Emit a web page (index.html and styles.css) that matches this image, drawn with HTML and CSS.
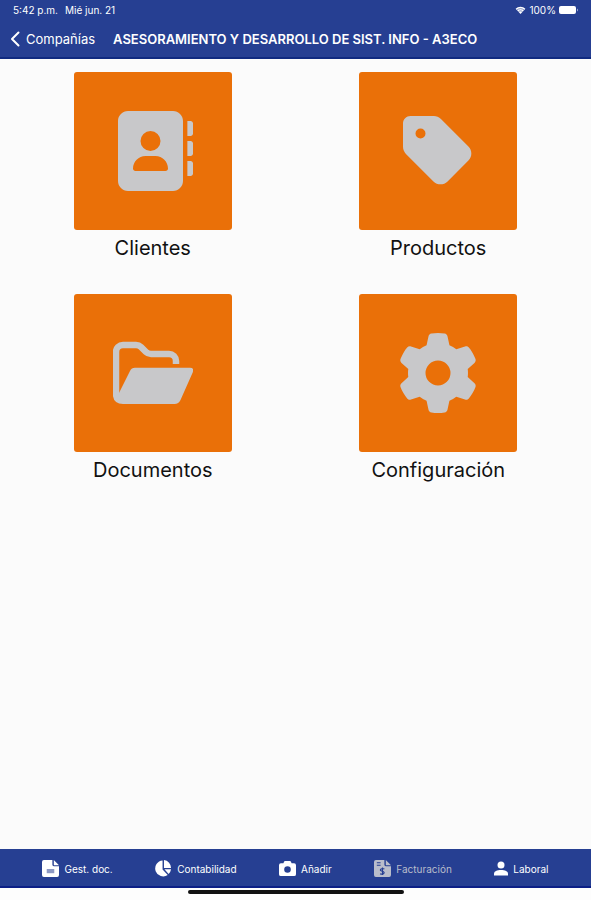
FILE: index.html
```html
<!DOCTYPE html>
<html lang="es">
<head>
<meta charset="utf-8">
<meta name="viewport" content="width=device-width, initial-scale=1">
<title>Facturación</title>
<link rel="stylesheet" href="styles.css">
</head>
<body>
<header class="top">
  <div class="status">
    <span>5:42 p.m.</span>
    <span>Mié jun. 21</span>
    <span class="status-right">
      <svg class="wifi" viewBox="0 0 12 9" aria-hidden="true"><path d="M6 9 0.5 3.2C3.500 0 8.500 0 11.500 3.200Z" fill="#fff"/><path d="M2 4.600C4.200 2.500 7.800 2.500 10 4.600M3.700 6.400C5 5.200 7 5.200 8.300 6.400" fill="none" stroke="#263f92" stroke-width=".7"/></svg>
      <span>100%</span>
      <svg class="battery" viewBox="0 0 20 8" aria-hidden="true"><rect width="17" height="8" rx="2" fill="#fff"/><path d="M18 2.500q2 1.500 0 3z" fill="#a9b3d6"/></svg>
    </span>
  </div>
  <nav class="bar">
    <a class="back" href="#companias"><svg class="chevron" viewBox="0 0 10 16" aria-hidden="true"><path d="M8.500 1.500 2 8l6.500 6.500" fill="none" stroke="#fff" stroke-width="2" stroke-linecap="round" stroke-linejoin="round"/></svg>Compañías</a>
    <h1 class="title">ASESORAMIENTO Y DESARROLLO DE SIST. INFO - A3ECO</h1>
  </nav>
</header>
<main class="grid">
  <button class="item" type="button">
    <span class="tile"><svg class="icon" viewBox="0 0 512 512" aria-hidden="true"><path d="M96 0C60.700 0 32 28.700 32 64V448c0 35.300 28.700 64 64 64H384c35.300 0 64-28.700 64-64V64c0-35.300-28.700-64-64-64H96zM208 288h64c44.200 0 80 35.800 80 80c0 8.800-7.200 16-16 16H144c-8.800 0-16-7.200-16-16c0-44.200 35.800-80 80-80zm-32-96a64 64 0 1 1 128 0 64 64 0 1 1-128 0zM476 64h20c8.800 0 16 7.200 16 16v64c0 8.800-7.200 16-16 16h-20zM476 192h20c8.800 0 16 7.200 16 16v64c0 8.800-7.200 16-16 16h-20zM476 320h20c8.800 0 16 7.200 16 16v64c0 8.800-7.200 16-16 16h-20z"/></svg></span>
    <span class="label">Clientes</span>
  </button>
  <button class="item" type="button">
    <span class="tile"><svg class="icon" viewBox="-32 0 512 512" aria-hidden="true"><path d="M0 80V229.500c0 17 6.700 33.300 18.700 45.300l176 176c25 25 65.500 25 90.500 0L418.700 317.300c25-25 25-65.500 0-90.500l-176-176c-12-12-28.300-18.700-45.300-18.700H48C21.500 32 0 53.500 0 80zm112 32a32 32 0 1 1 0 64 32 32 0 1 1 0-64z"/></svg></span>
    <span class="label">Productos</span>
  </button>
  <button class="item" type="button">
    <span class="tile"><svg class="icon" viewBox="0 0 80 80" aria-hidden="true"><path d="M3 60V19a7 7 0 0 1 7-7H23q3 0 5 2l5 5q2 2 5 2H56a7 7 0 0 1 7 7v3" fill="none" stroke="#c8c8ca" stroke-width="6.500"/><path d="M6 60 17 38Q18.500 34.700 22 34.700H77q4.500 0 2.800 4.500L67.500 67q-1.800 4-6 4H10Q0 71-.200 61V50H6z"/></svg></span>
    <span class="label">Documentos</span>
  </button>
  <button class="item" type="button">
    <span class="tile"><svg class="icon" viewBox="0 0 512 512" aria-hidden="true"><path d="M495.900 166.600c3.200 8.700 .5 18.400-6.400 24.600l-43.300 39.400c1.100 8.300 1.700 16.800 1.700 25.400s-.6 17.100-1.700 25.400l43.300 39.400c6.900 6.200 9.600 15.900 6.400 24.600c-4.400 11.900-9.700 23.300-15.800 34.300l-4.700 8.100c-6.600 11-14 21.400-22.100 31.200c-5.900 7.200-15.700 9.600-24.500 6.800l-55.700-17.700c-13.400 10.300-28.200 18.900-44 25.400l-12.500 57.100c-2 9.100-9 16.300-18.200 17.800c-13.800 2.300-28 3.500-42.500 3.500s-28.700-1.200-42.500-3.500c-9.200-1.500-16.200-8.700-18.200-17.800l-12.500-57.100c-15.800-6.500-30.600-15.100-44-25.400L83.100 425.900c-8.800 2.800-18.600 .3-24.500-6.800c-8.100-9.800-15.500-20.200-22.100-31.200l-4.700-8.100c-6.100-11-11.400-22.400-15.800-34.300c-3.200-8.700-.5-18.400 6.400-24.600l43.300-39.400C64.600 273.100 64 264.600 64 256s.6-17.100 1.700-25.400L22.400 191.200c-6.900-6.200-9.600-15.900-6.400-24.600c4.400-11.900 9.700-23.300 15.800-34.300l4.700-8.100c6.600-11 14-21.400 22.100-31.200c5.900-7.200 15.700-9.600 24.500-6.800l55.700 17.700c13.400-10.300 28.200-18.900 44-25.400l12.500-57.100c2-9.100 9-16.300 18.200-17.800C227.300 1.200 241.500 0 256 0s28.700 1.200 42.500 3.500c9.200 1.500 16.200 8.700 18.200 17.800l12.500 57.100c15.800 6.500 30.600 15.100 44 25.400l55.700-17.700c8.800-2.800 18.600-.3 24.500 6.800c8.100 9.800 15.500 20.200 22.100 31.200l4.700 8.100c6.100 11 11.400 22.400 15.800 34.300zM256 336a80 80 0 1 0 0-160 80 80 0 1 0 0 160z"/></svg></span>
    <span class="label">Configuración</span>
  </button>
</main>
<footer class="bottom">
  <nav class="tabs">
    <a class="tab" href="#gest"><svg class="tab-icon" viewBox="0 0 18 18" aria-hidden="true"><path d="M2 0h9v5q0 1.500 1.500 1.500H18V16q0 2-2 2H2q-2 0-2-2V2Q0 0 2 0zm10.500 0L18 5.500h-5.500z"/><path d="M5 9.500h8v4.500H5z" fill="#8d99c4"/></svg>Gest. doc.</a>
    <a class="tab" href="#contabilidad"><svg class="tab-icon" viewBox="0 0 18 18" aria-hidden="true"><path d="M8 .5v9.500l5.500 6A8.500 8.500 0 1 1 8 .5zM9.500 0A8.500 8.500 0 0 1 17 8.500H9.500zM10 9.800h7q-.5 3.200-2.600 5z"/></svg>Contabilidad</a>
    <a class="tab" href="#anadir"><svg class="tab-icon" viewBox="0 0 18 18" aria-hidden="true"><path fill-rule="evenodd" d="M6.500 1h5q1 0 1.300 1l.5 1.500H16q2 0 2 2v9.500q0 2-2 2H2q-2 0-2-2V5.500q0-2 2-2h2.700l.5-1.500q.3-1 1.300-1zM9 6.500a3.500 3.500 0 1 0 0 7 3.500 3.500 0 0 0 0-7z"/></svg>Añadir</a>
    <a class="tab tab-current" href="#facturacion" aria-current="page"><svg class="tab-icon" viewBox="0 0 18 18" aria-hidden="true"><path fill-rule="evenodd" d="M2 0h9v5q0 1.500 1.500 1.500H18V16q0 2-2 2H2q-2 0-2-2V2Q0 0 2 0zm10.500 0L18 5.500h-5.500zM3 2.500v1h4v-1zm0 2.500v1h4V5z"/><path d="M11 9.500q-2-1-3.500 0t0 2l2.500 1q1.500 1 0 2t-3.500 0M9 8v8" fill="none" stroke="#263f92" stroke-width="1.200"/></svg>Facturación</a>
    <a class="tab" href="#laboral"><svg class="tab-icon tab-person" viewBox="0 0 14 16" aria-hidden="true"><circle cx="7" cy="4.500" r="3.500"/><path d="M0 15v-1.500C0 10.500 3 9.500 7 9.500s7 1 7 4V15z"/></svg>Laboral</a>
  </nav>
  <div class="home"></div>
</footer>
</body>
</html>
```

FILE: styles.css
```css
* { box-sizing: border-box; }

body {
  margin: 0;
  min-height: 100vh;
  display: flex;
  flex-direction: column;
  background: #fbfbfb;
  color: #111;
  font-family: Inter, "Liberation Sans", sans-serif;
}

.top {
  background: #263f92;
  color: #fff;
  border-bottom: 2px solid #102a80;
}

.status {
  display: flex;
  align-items: center;
  gap: 7px;
  height: 20px;
  padding: 0 12px 0 13px;
  font-size: 10px;
}

.status-right {
  display: flex;
  align-items: center;
  gap: 3px;
  margin-left: auto;
}

.wifi { width: 11px; height: 8px; }
.battery { width: 20px; height: 8px; }

.bar {
  display: flex;
  align-items: center;
  gap: 18px;
  height: 37px;
  padding: 0 10px;
}

.back {
  display: flex;
  align-items: center;
  gap: 6px;
  color: #fff;
  font-size: 13px;
  text-decoration: none;
}

.chevron { width: 10px; height: 16px; }

.title {
  margin: 0;
  font-size: 13px;
  font-weight: 600;
  white-space: nowrap;
}

.grid {
  flex: 1;
  display: grid;
  grid-template-columns: 1fr 1fr;
  align-content: start;
  gap: 32px 0;
  padding: 13px 10px;
}

.item {
  display: flex;
  flex-direction: column;
  align-items: center;
  gap: 4px;
  padding: 0;
  border: 0;
  background: none;
  color: inherit;
  font: inherit;
}

.tile {
  display: grid;
  place-items: center;
  width: 158px;
  height: 158px;
  border-radius: 3px;
  background: #ea7008;
}

.icon {
  width: 80px;
  height: 80px;
  fill: #c8c8ca;
}

.label {
  font-size: 20px;
  line-height: 28px;
}

.bottom { background: #fdfdfd; }

.tabs {
  display: flex;
  justify-content: space-evenly;
  align-items: center;
  height: 39px;
  padding-top: 2px;
  background: #263f92;
  border-bottom: 2px solid #0c1f86;
}

.tab {
  display: flex;
  align-items: center;
  gap: 5px;
  color: #fff;
  font-size: 10px;
  text-decoration: none;
}

.tab-icon {
  width: 17px;
  height: 17px;
  fill: currentColor;
}

.tab-person { width: 14px; }

.tab-current { color: #b9bdcb; }

.home {
  width: 216px;
  height: 4px;
  margin: 2px auto 6px;
  border-radius: 2px;
  background: #111;
}
```
